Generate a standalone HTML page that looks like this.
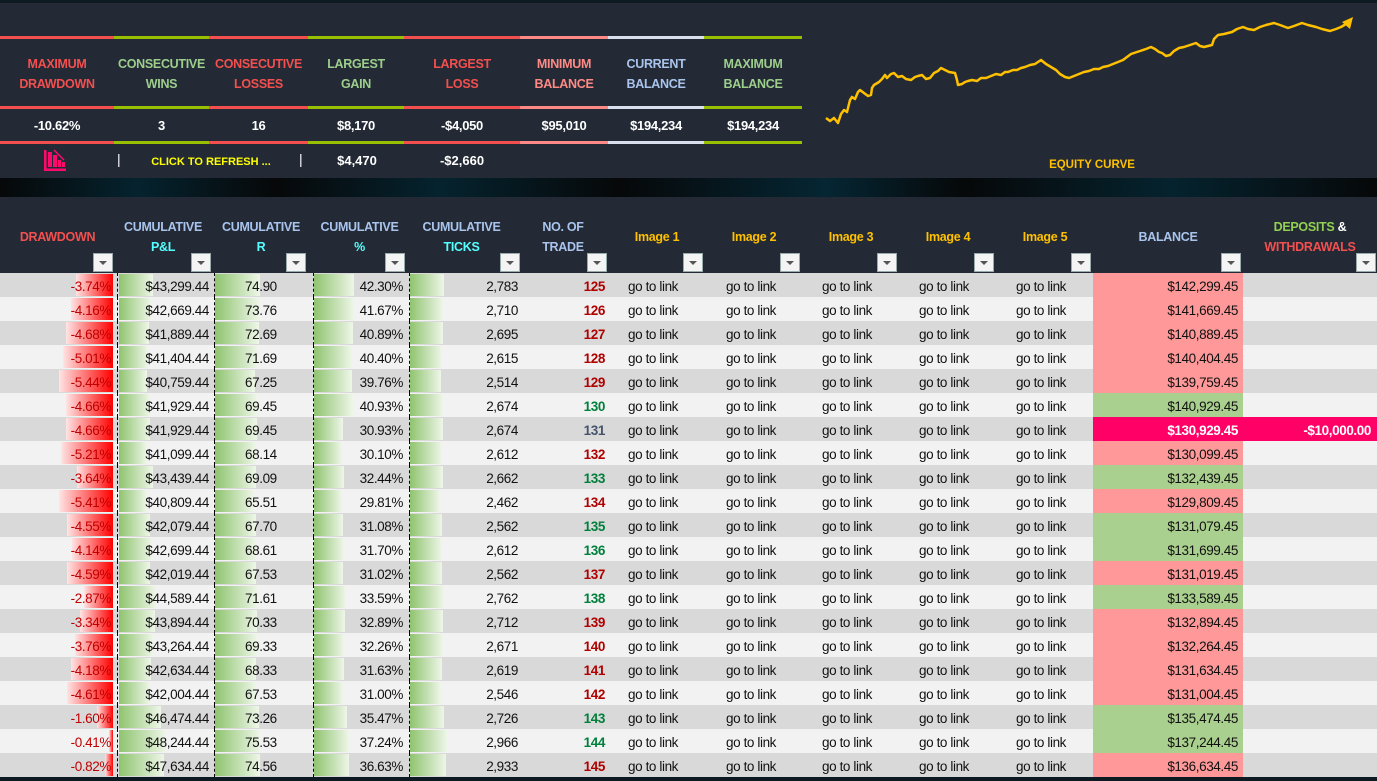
<!DOCTYPE html>
<html><head><meta charset="utf-8"><style>
*{margin:0;padding:0;box-sizing:border-box}
body{width:1377px;height:774px;overflow:hidden;background:#0e1a22;font-family:"Liberation Sans",sans-serif;position:relative}
.a{position:absolute}
.panel{left:0;top:3px;width:1377px;height:175px;background:#232a35}
.hl{height:3px}
.lbl{font-size:12.5px;font-weight:bold;text-align:center;line-height:20px;letter-spacing:-0.3px}
.val{font-size:13px;font-weight:bold;color:#fff;text-align:center;letter-spacing:-0.3px}
.th{background:#232a35;left:0;top:197px;width:1377px;height:76px}
.hd{font-size:12.5px;font-weight:bold;text-align:center;line-height:20px;letter-spacing:-0.3px}
.dd{width:20px;height:19px;background:#f4f4f4;border:1px solid #9aa;top:253px}
.dd:after{content:"";position:absolute;left:5px;top:7px;border-left:4px solid transparent;border-right:4px solid transparent;border-top:4px solid #555}
.row{position:absolute;left:0;width:1377px;height:24px;font-size:13.5px;color:#111;letter-spacing:-0.4px}
.c{position:absolute;top:0;height:24px;line-height:28px;white-space:nowrap}
.r{text-align:right}
</style></head><body>
<div class="a" style="left:0;top:178px;width:1377px;height:19px;background:linear-gradient(90deg,#060809,#05232e 10%,#060809 20%,#05232e 32%,#060809 45%,#052633 60%,#060809 70%,#05232e 85%,#060809)"></div>
<div class="a panel"></div>
<div id="top"></div>
<svg class="a" style="left:0;top:0" width="1377" height="180">
<polyline fill="none" stroke="#ffc000" stroke-width="2.5" stroke-linejoin="round" points="826,118 830,121 834,118 838,123 841,114 844,110 847,112 850,100 852,97 855,99 858,92 860,90 864,93 868,96 871,95 872,88 874,85 879,82 882,79 885,75 887,78 891,74 894,73 898,77 902,76 906,79 911,80 915,77 918,76 922,75 926,79 930,78 934,73 938,71 941,68 945,70 949,72 955,73 957,80 958,85 962,84 965,82 968,81 972,80 977,81 981,78 986,78 991,76 996,74 1001,75 1005,72 1008,72 1013,70 1017,70 1021,68 1025,67 1030,65 1035,64 1041,60 1046,64 1051,67 1056,70 1060,74 1065,77 1069,78 1074,76 1079,74 1084,72 1089,71 1094,69 1099,69 1103,67 1108,66 1113,64 1118,62 1123,60 1127,57 1131,54 1134,53 1140,51 1146,49 1151,47 1155,49 1159,52 1162,53 1166,56 1170,55 1174,51 1179,48 1184,47 1190,45 1196,43 1200,46 1204,47 1208,46 1212,45 1214,39 1218,35 1224,34 1228,33 1232,32 1237,29 1243,27 1248,29 1254,30 1260,27 1266,25 1274,23 1280,25 1288,28 1294,26 1302,23 1308,25 1316,27 1322,29 1330,31 1336,29 1341,27 1346,24 1349,21"/>
<polygon points="1353,17 1342,22 1350,29" fill="#ffc000"/>
<text x="1092" y="168" font-family="Liberation Sans" font-size="11.5" font-weight="bold" fill="#ffc000" text-anchor="middle">EQUITY CURVE</text>
<g fill="#ff0a6c"><rect x="44" y="150" width="2.5" height="21"/><rect x="44" y="168.5" width="22" height="2.5"/><rect x="48" y="152" width="4" height="15"/><rect x="53" y="155" width="4" height="12"/><rect x="58" y="160" width="3" height="7"/><rect x="62" y="162" width="3" height="5"/></g>
<path d="M54 150 L64 160" stroke="#ff0a6c" stroke-width="1.5"/>
<rect x="118" y="154" width="1.5" height="13" fill="#ccd"/><rect x="300" y="154" width="1.5" height="13" fill="#ccd"/>
<text x="211" y="165" font-family="Liberation Sans" font-size="11" font-weight="bold" fill="#ffff00" text-anchor="middle">CLICK TO REFRESH ...</text>
<text x="357" y="165" font-family="Liberation Sans" font-size="13" font-weight="bold" fill="#fff" text-anchor="middle">$4,470</text>
<text x="462" y="165" font-family="Liberation Sans" font-size="13" font-weight="bold" fill="#fff" text-anchor="middle">-$2,660</text>
</svg>
<div class="a th"></div>
<div id="hdr"></div>
<div id="rows"></div>
<script>
var secs=[[0,114,'#f44f4f','#f44f4f','MAXIMUM<br>DRAWDOWN','-10.62%'],[114,209,'#99c000','#9dce8c','CONSECUTIVE<br>WINS','3'],[209,308,'#f44f4f','#f44f4f','CONSECUTIVE<br>LOSSES','16'],[308,404,'#99c000','#9dce8c','LARGEST<br>GAIN','$8,170'],[404,520,'#f44f4f','#f44f4f','LARGEST<br>LOSS','-$4,050'],[520,608,'#ff8a85','#ff8a85','MINIMUM<br>BALANCE','$95,010'],[608,704,'#d9dfee','#a9c4ec','CURRENT<br>BALANCE','$194,234'],[704,802,'#99c000','#9dce8c','MAXIMUM<br>BALANCE','$194,234']];
var h='';
secs.forEach(function(s){var w=s[1]-s[0];
[36,106,141].forEach(function(y){h+='<div class="a hl" style="left:'+s[0]+'px;top:'+y+'px;width:'+w+'px;background:'+s[2]+'"></div>'});
h+='<div class="a lbl" style="left:'+s[0]+'px;top:54px;width:'+w+'px;color:'+s[3]+'">'+s[4]+'</div>';
h+='<div class="a val" style="left:'+s[0]+'px;top:118px;width:'+w+'px">'+s[5]+'</div>';});
document.getElementById('top').innerHTML=h;
var cols=[[0,115,'<span style="color:#f44f4f">DRAWDOWN</span>',236,93],[115,211,'<span style="color:#a9c4ec">CUMULATIVE</span><br><span style="color:#5ff">P&amp;L</span>',226,191],[211,311,'<span style="color:#a9c4ec">CUMULATIVE</span><br><span style="color:#5ff">R</span>',226,286],[311,408,'<span style="color:#a9c4ec">CUMULATIVE</span><br><span style="color:#5ff">%</span>',226,385],[408,515,'<span style="color:#a9c4ec">CUMULATIVE</span><br><span style="color:#5ff">TICKS</span>',226,500],[522,604,'<span style="color:#a9c4ec">NO. OF<br>TRADE</span>',226,587],[610,704,'<span style="color:#ffc000">Image 1</span>',236,683],[707,801,'<span style="color:#ffc000">Image 2</span>',236,780],[804,898,'<span style="color:#ffc000">Image 3</span>',236,877],[901,995,'<span style="color:#ffc000">Image 4</span>',236,974],[998,1092,'<span style="color:#ffc000">Image 5</span>',236,1071],[1093,1243,'<span style="color:#a9c4ec">BALANCE</span>',236,1221],[1243,1377,'<span style="color:#92d050">DEPOSITS</span> <span style="color:#fff">&amp;</span><br><span style="color:#f44f4f">WITHDRAWALS</span>',226,1356]];
h='';cols.forEach(function(c){h+='<div class="a hd" style="left:'+c[0]+'px;top:'+(c[3]-9)+'px;width:'+(c[1]-c[0])+'px">'+c[2]+'</div><div class="a dd" style="left:'+c[4]+'px"></div>'});
document.getElementById('hdr').innerHTML=h;
var D=[[-3.74,43299.44,74.90,42.30,2783,125,'r',142299.45],[-4.16,42669.44,73.76,41.67,2710,126,'r',141669.45],[-4.68,41889.44,72.69,40.89,2695,127,'r',140889.45],[-5.01,41404.44,71.69,40.40,2615,128,'r',140404.45],[-5.44,40759.44,67.25,39.76,2514,129,'r',139759.45],[-4.66,41929.44,69.45,40.93,2674,130,'g',140929.45],[-4.66,41929.44,69.45,30.93,2674,131,'b',130929.45],[-5.21,41099.44,68.14,30.10,2612,132,'r',130099.45],[-3.64,43439.44,69.09,32.44,2662,133,'g',132439.45],[-5.41,40809.44,65.51,29.81,2462,134,'r',129809.45],[-4.55,42079.44,67.70,31.08,2562,135,'g',131079.45],[-4.14,42699.44,68.61,31.70,2612,136,'g',131699.45],[-4.59,42019.44,67.53,31.02,2562,137,'r',131019.45],[-2.87,44589.44,71.61,33.59,2762,138,'g',133589.45],[-3.34,43894.44,70.33,32.89,2712,139,'r',132894.45],[-3.76,43264.44,69.33,32.26,2671,140,'r',132264.45],[-4.18,42634.44,68.33,31.63,2619,141,'r',131634.45],[-4.61,42004.44,67.53,31.00,2546,142,'r',131004.45],[-1.60,46474.44,73.26,35.47,2726,143,'g',135474.45],[-0.41,48244.44,75.53,37.24,2966,144,'g',137244.45],[-0.82,47634.44,74.56,36.63,2933,145,'r',136634.45]];
function f(n,d){return n.toLocaleString('en-US',{minimumFractionDigits:d,maximumFractionDigits:d})}
var G='linear-gradient(90deg,#8fc46f,#eef6e8)';
h='';D.forEach(function(d,i){var y=273+i*24,bg=i%2?'#f2f2f2':'#d9d9d9';
var s='<div class="row" style="top:'+y+'px;background:'+bg+'">';
var dw=Math.round(Math.abs(d[0])*10);
s+='<div class="c" style="left:'+(113-dw)+'px;width:'+dw+'px;top:1px;height:22px;background:linear-gradient(90deg,#ffe4e4,#ff0000)"></div>';
s+='<div class="c r" style="left:0;width:111px;color:#c00000">'+d[0].toFixed(2)+'%</div>';
s+='<div class="c" style="left:119px;top:1px;height:22px;width:'+Math.round((d[1]-30000)/390)+'px;background:'+G+'"></div>';
s+='<div class="c r" style="left:115px;width:94px">$'+f(d[1],2)+'</div>';
s+='<div class="c" style="left:215px;top:1px;height:22px;width:'+Math.round(d[2]*0.6)+'px;background:'+G+'"></div>';
s+='<div class="c" style="left:245px">'+d[2].toFixed(2)+'</div>';
s+='<div class="c" style="left:314px;top:1px;height:22px;width:'+Math.round(d[3]-2)+'px;background:'+G+'"></div>';
s+='<div class="c r" style="left:311px;width:92px">'+d[3].toFixed(2)+'%</div>';
s+='<div class="c" style="left:410px;top:1px;height:22px;width:'+Math.round(d[4]/81)+'px;background:'+G+'"></div>';
s+='<div class="c r" style="left:408px;width:110px">'+f(d[4],0)+'</div>';
var tc={r:'#b00000',g:'#00803c',b:'#44546a'}[d[6]];
s+='<div class="c r" style="left:522px;width:83px;color:'+tc+';font-weight:bold">'+d[5]+'</div>';
[628,726,822,919,1016].forEach(function(x){s+='<div class="c" style="left:'+x+'px">go to link</div>'});
var bb=i==6?'#ff0066':(d[6]=='g'?'#a9d08e':'#ff9999');
s+='<div class="c r" style="left:1093px;width:150px;padding-right:5px;background:'+bb+(i==6?';color:#fff;font-weight:bold':'')+'">$'+f(d[7],2)+'</div>';
if(i==6)s+='<div class="c r" style="left:1243px;width:134px;padding-right:6px;background:#ff0066;color:#fff;font-weight:bold">-$10,000.00</div>';
[117,214,313,409].forEach(function(x){s+='<div class="c" style="left:'+x+'px;width:0;border-left:1px dashed #000"></div>'});
s+='</div>';h+=s;});
document.getElementById('rows').innerHTML=h;
</script>
</body></html>
